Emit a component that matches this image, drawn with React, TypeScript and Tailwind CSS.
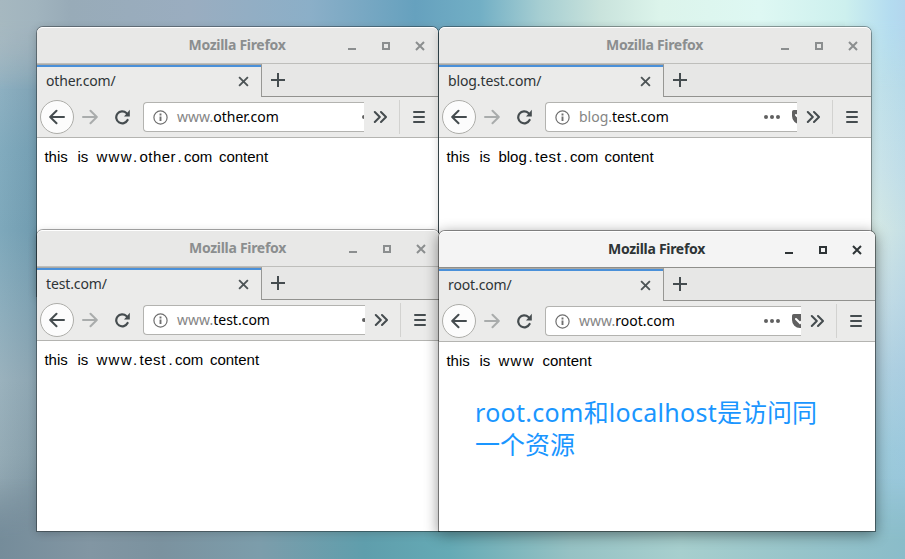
import type { ReactNode } from "react";

type Piece = [text: string, widthClass: string];

type BrowserWindowProps = {
  frame: string;
  active?: boolean;
  tab: string;
  subdomain: string;
  domain: string;
  actions: string;
  body: Piece[];
  children?: ReactNode;
};

const THIS: Piece = ["this ", "w-[33px]"];
const IS: Piece = ["is ", "w-[19px]"];
const WWW: Piece = ["www", "w-[36.5px] tracking-[1.3px]"];
const DOT: Piece = [".", "w-[6.5px]"];
const COM: Piece = ["com ", "w-[35px]"];
const CONTENT: Piece = ["content", "w-[52px]"];

function Cross({ className, width }: { className: string; width: number }) {
  return (
    <svg className={className} viewBox="0 0 10 10" fill="none" stroke="currentColor" strokeWidth={width}>
      <path d="M1 1l8 8M9 1L1 9" />
    </svg>
  );
}

function TitleBar({ active }: { active?: boolean }) {
  return (
    <div
      className={
        "flex h-[37px] shrink-0 items-center justify-end rounded-t-[6px] border-b border-t border-t-white pr-[13px] " +
        (active ? "border-b-[#8f8f8b] bg-[#f4f4f4] text-[#2e3436]" : "border-b-[#bebebb] bg-[#e8e8e7] text-[#8b8e8f]")
      }
    >
      <span className="w-[89px] shrink-0" />
      <span className="flex-1 whitespace-nowrap pb-[2px] text-center font-['Noto_Sans',sans-serif] text-[14px] font-bold leading-[20px] tracking-[-0.3px]">
        Mozilla Firefox
      </span>
      <span className="mt-[6px] h-[2px] w-2 bg-current" />
      <span className="ml-[26px] h-2 w-2 border-2 border-current" />
      <Cross className="ml-[25px] h-[10px] w-[10px]" width={2} />
    </div>
  );
}

function TabStrip({ tab }: { tab: string }) {
  return (
    <div className="flex h-[33px] shrink-0 bg-[#e7e7e6]">
      <div className="flex w-[225px] shrink-0 flex-col border-r border-t border-r-[#979794] border-t-[#aaa9a5] bg-[#ebebea]">
        <div className="h-[2px] shrink-0 bg-[#4a90d9]" />
        <div className="flex flex-1 items-center justify-between pb-px pl-[9px] pr-3">
          <span className="pb-[2px] font-['Noto_Sans',sans-serif] text-[14px] leading-5 tracking-[-0.12px] text-[#2e3436]">{tab}</span>
          <Cross className="h-[11px] w-[11px] text-[#4d5456]" width={1.7} />
        </div>
      </div>
      <div className="flex flex-1 items-center border-b border-[#92928f] pl-[9px]">
        <svg className="h-[14px] w-[14px] text-[#454c4f]" viewBox="0 0 14 14" stroke="currentColor" strokeWidth="2">
          <path d="M7 0v14M0 7h14" />
        </svg>
      </div>
    </div>
  );
}

function Toolbar({ subdomain, domain, actions }: { subdomain: string; domain: string; actions: string }) {
  return (
    <div className="flex h-[41px] shrink-0 items-center border-b border-[#b4b4b1] bg-[#ebebea] pl-[3px] text-[#454c4f]">
      <div className="flex h-[34px] w-[34px] shrink-0 items-center justify-center rounded-full border border-[#adada9] bg-[#fcfcfc]">
        <svg className="h-4 w-4" viewBox="0 0 16 16" fill="none" stroke="currentColor" strokeWidth="2" strokeLinecap="round" strokeLinejoin="round">
          <path d="M15 8H1.5M7.5 1.8L1.2 8l6.3 6.2" />
        </svg>
      </div>
      <svg className="ml-2 h-4 w-4 shrink-0 text-[#a9acac]" viewBox="0 0 16 16" fill="none" stroke="currentColor" strokeWidth="2" strokeLinecap="round" strokeLinejoin="round">
        <path d="M1 8h13.5M8.5 1.8L14.8 8l-6.3 6.2" />
      </svg>
      <svg className="ml-4 h-4 w-4 shrink-0" viewBox="0 0 16 16" fill="none">
        <path d="M13.6 11A6 6 0 1 1 12.4 4" stroke="currentColor" strokeWidth="2.2" strokeLinecap="round" />
        <path d="M15.8 .8v6.6H10z" fill="currentColor" />
      </svg>
      <div className="ml-[13px] flex h-[30px] min-w-0 flex-1 items-center overflow-hidden rounded-l-[4px] border border-r-0 border-[#b3b3b0] bg-white pl-[9px]">
        <svg className="h-[15px] w-[15px] shrink-0 text-[#6f6f6f]" viewBox="0 0 15 15" fill="none" stroke="currentColor">
          <circle cx="7.5" cy="7.5" r="6.6" strokeWidth="1.2" />
          <path d="M7.5 6.5v4.6M7.5 3.6v1.8" strokeWidth="1.9" />
        </svg>
        <span className={"shrink-0 whitespace-nowrap pl-[9px] font-['Noto_Sans',sans-serif] text-[14px] leading-5 text-black " + actions}>
          <span className="text-[#858585]">{subdomain}</span>
          {domain}
        </span>
        <svg className="h-4 w-4 shrink-0 text-[#606060]" viewBox="0 0 16 16" fill="currentColor">
          <circle cx="2" cy="8" r="2" />
          <circle cx="8" cy="8" r="2" />
          <circle cx="14" cy="8" r="2" />
        </svg>
        <svg className="ml-3 h-4 w-4 shrink-0" viewBox="0 0 16 16">
          <path d="M1.8 1h12.4A1.8 1.8 0 0 1 16 2.8V7A8 8 0 0 1 0 7V2.8A1.8 1.8 0 0 1 1.8 1z" fill="#606060" />
          <path d="M4 6l4 4 4-4" fill="none" stroke="white" strokeWidth="2" strokeLinecap="round" />
        </svg>
      </div>
      <div className="flex h-[34px] w-[74px] shrink-0 items-center">
        <svg className="ml-[9px] h-[14px] w-[14px]" viewBox="0 0 14 14" fill="none" stroke="currentColor" strokeWidth="2" strokeLinecap="round" strokeLinejoin="round">
          <path d="M1.8 2L6.8 7l-5 5M8 2l5 5-5 5" />
        </svg>
        <span className="ml-3 h-[34px] w-px bg-[#d2d2d0]" />
        <span className="ml-[13px] flex flex-col gap-[3px]">
          <span className="h-[2px] w-3 rounded-full bg-current" />
          <span className="h-[2px] w-3 rounded-full bg-current" />
          <span className="h-[2px] w-3 rounded-full bg-current" />
        </span>
      </div>
    </div>
  );
}

function BrowserWindow({ frame, active, tab, subdomain, domain, actions, body, children }: BrowserWindowProps) {
  return (
    <section
      className={
        "absolute flex flex-col rounded-t-[6px] bg-white " +
        (active
          ? "shadow-[0_0_0_1px_rgba(0,0,0,0.42),0_3px_14px_1px_rgba(0,0,0,0.42)] "
          : "shadow-[0_0_0_1px_rgba(0,0,0,0.34),0_2px_10px_rgba(0,0,0,0.2)] ") +
        frame
      }
    >
      <TitleBar active={active} />
      <TabStrip tab={tab} />
      <Toolbar subdomain={subdomain} domain={domain} actions={actions} />
      <p className="flex whitespace-pre pl-[7.4px] pt-[9px] font-['Liberation_Sans',sans-serif] text-[15px] leading-5 text-black">
        {body.map(([text, width], i) => (
          <span key={i} className={"inline-block shrink-0 " + width}>
            {text}
          </span>
        ))}
      </p>
      {children}
    </section>
  );
}

function Wallpaper() {
  return (
    <div className="grid h-full grid-cols-1 grid-rows-1">
      <div className="col-start-1 row-start-1 flex justify-between">
        <div className="w-[60px] bg-[linear-gradient(90deg,rgba(255,255,255,0.06)_0px,rgba(40,60,80,0.08)_37px),linear-gradient(180deg,#a6b8c0_0px,#9db3be_40px,#86abbd_90px,#7aa6ba_150px,#76a3b7_230px,#86a9b9_310px,#94adb9_380px,#8ea6b1_455px,#758c9a_559px)]" />
        <div className="w-[60px] bg-[linear-gradient(90deg,transparent_20px,rgba(151,196,231,0.3)_60px),linear-gradient(180deg,#bfe6e9_0px,#c5e4ea_90px,#d0e7e9_170px,#d9ebe4_230px,#c9dfe4_300px,#b3d2df_370px,#9ecbd9_450px,#8fc2cf_559px)]" />
      </div>
      <div className="col-start-1 row-start-1 h-[90px] bg-[linear-gradient(90deg,#a6b8c0_0px,#a1b4be_36px,#98abb8_70px,#9aadc0_190px,#8bafc8_310px,#66a1be_415px,#72afc5_480px,#a6ced2_540px,#c9e3dc_600px,#dcf4eb_660px,#def8f3_760px,#cdf0ee_845px,#b4dcf0_890px,#b3d6ee_905px)] [mask-image:linear-gradient(180deg,black_20px,transparent_90px)]" />
      <div className="col-start-1 row-start-1 h-[80px] self-end bg-[linear-gradient(90deg,#758c9a_0px,#8296a3_90px,#7b929f_160px,#7c9dab_260px,#5f9eac_365px,#65aab5_450px,#96c2c4_570px,#a7cfce_680px,#98c5ca_790px,#8abcc9_905px)] [mask-image:linear-gradient(180deg,transparent_0px,black_60px)]" />
    </div>
  );
}

export default function App() {
  return (
    <main className="relative h-[559px] w-[905px] overflow-hidden bg-[#96bcc6]">
      <Wallpaper />

      <BrowserWindow
        frame="left-[37px] top-[27px] h-[269px] w-[401px]"
        tab="other.com/"
        subdomain="www."
        domain="other.com"
        actions="w-[194px]"
        body={[THIS, IS, WWW, DOT, ["other", "w-[38px] tracking-[0.5px]"], DOT, COM, CONTENT]}
      />
      <BrowserWindow
        frame="left-[439px] top-[27px] h-[269px] w-[432px]"
        tab="blog.test.com/"
        subdomain="blog."
        domain="test.com"
        actions="w-[194px]"
        body={[THIS, IS, ["blog", "w-[30px]"], DOT, ["test", "w-[28.5px] tracking-[0.6px]"], DOT, ["com ", "w-[34.5px]"], CONTENT]}
      />
      <BrowserWindow
        frame="left-[37px] top-[230px] h-[301px] w-[402px]"
        tab="test.com/"
        subdomain="www."
        domain="test.com"
        actions="w-[194px]"
        body={[THIS, IS, WWW, DOT, ["test", "w-[29px] tracking-[0.6px]"], DOT, COM, CONTENT]}
      />
      <BrowserWindow
        active
        frame="left-[439px] top-[231px] h-[300px] w-[436px]"
        tab="root.com/"
        subdomain="www."
        domain="root.com"
        actions="w-[194px]"
        body={[THIS, IS, ["www ", "w-[44px] tracking-[1.3px]"], CONTENT]}
      >
        <p className="ml-9 mt-[25px] whitespace-nowrap font-['Noto_Sans','Noto_Sans_CJK_SC',sans-serif] text-[25px] leading-8 text-[#1a96ff]">
          <span className="tracking-[0.3px]">root.com</span>和<span className="tracking-[0.3px]">localhost</span>是访问同
          <br />
          一个资源
        </p>
      </BrowserWindow>
    </main>
  );
}
